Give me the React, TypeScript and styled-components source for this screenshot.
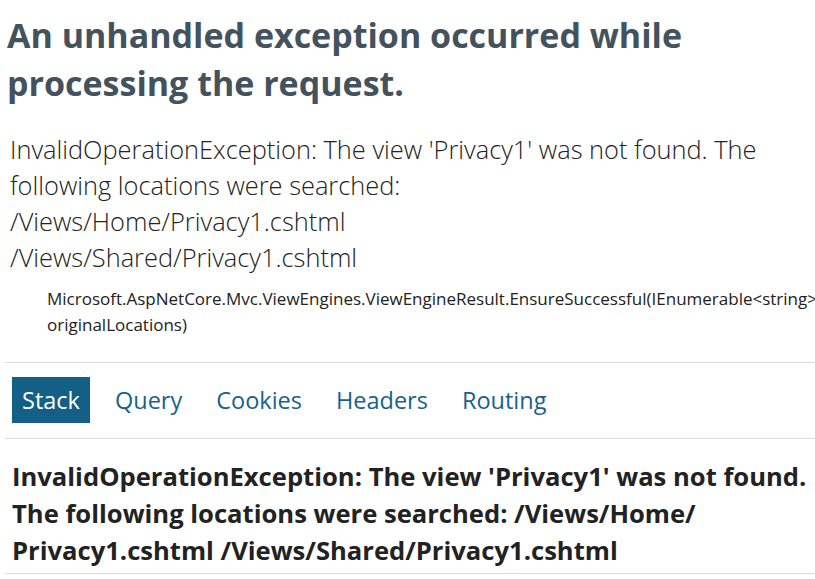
import * as React from "react";
import styled, { createGlobalStyle } from "styled-components";

const GlobalStyle = createGlobalStyle`
  html, body {
    margin: 0;
    padding: 0;
    overflow: hidden;
    background: #fff;
  }
  body {
    font-family: "Open Sans", "Noto Sans", "Liberation Sans", sans-serif;
    color: #222;
  }
`;

const Page = styled.div`
  padding: 0 0 0 5px;
  width: 840px;
`;

const Title = styled.h1`
  color: #44525e;
  font-size: 34px;
  line-height: 48px;
  font-weight: 700;
  margin: 11px 0 24px 2px;
`;

const ErrorList = styled.ul`
  list-style: none;
  margin: 0;
  padding: 0;
`;

const TitleError = styled.span`
  display: block;
  padding: 0 4px 11px 5px;
  font-size: 25.4px;
  line-height: 36px;
  font-weight: 300;
  color: #222;
`;

const Location = styled.div`
  margin: 0 0 24px 42px;
  font-size: 17px;
  line-height: 26px;
  color: #222;
  white-space: nowrap;
`;

const Header = styled.ul`
  list-style: none;
  margin: 0;
  padding: 14px 0 15px;
  display: flex;
  align-items: center;
  gap: 16px;
  border-top: 1px solid #ddd;
  border-bottom: 1px solid #ddd;
`;

const Tab = styled.li<{ $selected?: boolean }>`
  margin-left: ${(p) => (p.$selected ? "7px" : "0")};
  padding: 8px ${(p) => (p.$selected ? "10px" : "9px")};
  font-size: 23.5px;
  line-height: 30px;
  color: ${(p) => (p.$selected ? "#fff" : "#17628c")};
  background: ${(p) => (p.$selected ? "#135f86" : "transparent")};
  cursor: pointer;
`;

const StackPage = styled.div`
  border-bottom: 1px solid #ddd;
`;

const StackTitle = styled.h3`
  margin: 0;
  padding: 19px 0 4px 7px;
  font-size: 25.6px;
  line-height: 37px;
  font-weight: 700;
  color: #222;
`;

const tabs = ["Stack", "Query", "Cookies", "Headers", "Routing"];

export default function App() {
  return (
    <>
      <GlobalStyle />
      <Page>
        <Title>An unhandled exception occurred while processing the request.</Title>
        <ErrorList>
          <li>
            <TitleError>
              InvalidOperationException: The view 'Privacy1' was not found. The following
              locations were searched:
              <br />
              /Views/Home/Privacy1.cshtml
              <br />
              /Views/Shared/Privacy1.cshtml
            </TitleError>
            <Location>
              Microsoft.AspNetCore.Mvc.ViewEngines.ViewEngineResult.EnsureSuccessful(IEnumerable&lt;string&gt;
              <br />
              originalLocations)
            </Location>
          </li>
        </ErrorList>
        <Header>
          {tabs.map((t, i) => (
            <Tab key={t} $selected={i === 0}>
              {t}
            </Tab>
          ))}
        </Header>
        <StackPage>
          <StackTitle>
            InvalidOperationException: The view 'Privacy1' was not found. The following
            locations were searched: /Views/Home/
            <wbr />
            Privacy1.cshtml /Views/Shared/Privacy1.cshtml
          </StackTitle>
        </StackPage>
      </Page>
    </>
  );
}
